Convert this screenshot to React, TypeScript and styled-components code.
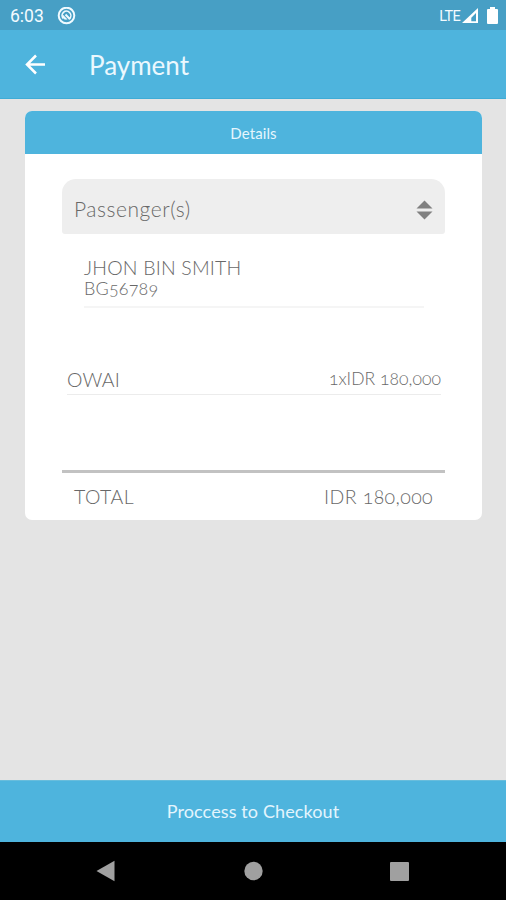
import React from "react";
import styled, { createGlobalStyle } from "styled-components";

const GlobalStyle = createGlobalStyle`
  * { box-sizing: border-box; }
  body { margin: 0; background: #e4e4e4; }
`;

const Screen = styled.div`
  width: 506px;
  height: 900px;
  display: flex;
  flex-direction: column;
  overflow: hidden;
  background: #e4e4e4;
  font-family: "Lato", "Open Sans", sans-serif;
  font-variant-numeric: oldstyle-nums;
`;

const StatusBar = styled.div`
  height: 30px;
  flex: none;
  display: flex;
  align-items: center;
  padding: 2px 8px 0 10px;
  background: #479fc5;
  color: #f3fbff;
  font-family: "Roboto", sans-serif;
  font-variant-numeric: normal;
`;

const Clock = styled.span`
  width: 47px;
  font-size: 17.5px;
`;

const Network = styled.span`
  margin-left: auto;
  margin-right: 2px;
  font-size: 14.5px;
  letter-spacing: -0.7px;
`;

const BatteryIcon = styled.svg`
  margin-left: 8px;
  margin-top: -2px;
`;

const AppBar = styled.header`
  height: 69px;
  flex: none;
  display: flex;
  align-items: center;
  padding-left: 24px;
  background: #4eb4dd;
  border-bottom: 1px solid #3eacd6;
`;

const Label = styled.span<{ $size: number; $spacing?: number; $weight?: number }>`
  font-size: ${(p) => p.$size}px;
  font-weight: ${(p) => p.$weight ?? 300};
  letter-spacing: ${(p) => p.$spacing ?? 0}px;
  line-height: 24px;
  white-space: nowrap;
`;

const Title = styled(Label)`
  margin-left: 43px;
  padding-top: 2px;
  color: #ebf8fe;
`;

const Content = styled.main`
  flex: 1;
  padding: 12px 24px 0 25px;
`;

const Card = styled.section`
  height: 409px;
  overflow: hidden;
  border-radius: 7px;
  background: #fff;
`;

const CardHeader = styled.div`
  height: 43px;
  display: flex;
  align-items: center;
  justify-content: center;
  background: #4eb4dd;
  color: #e6f6fd;
`;

const CardBody = styled.div`
  display: flex;
  flex-direction: column;
  padding: 25px 37px 0;
  color: #686868;
`;

const Selector = styled.div`
  height: 55px;
  display: flex;
  align-items: center;
  justify-content: space-between;
  padding: 5px 12px 0 12px;
  border-radius: 14px 14px 3px 3px;
  background: #eee;
`;

const SortIcon = styled.svg`
  margin-top: 1px;
`;

const Passenger = styled.div`
  height: 74px;
  display: flex;
  flex-direction: column;
  margin: 0 21px 0 22px;
  padding-top: 23px;
  border-bottom: 2px solid #f5f5f5;

  & > span { line-height: 21px; }
`;

const FareRow = styled.div`
  height: 87px;
  display: flex;
  align-items: flex-end;
  justify-content: space-between;
  margin: 0 4px 0 5px;
  padding-bottom: 2px;
  border-bottom: 1px solid #ececec;
`;

const FareAmount = styled(Label)`
  padding-bottom: 1px;
`;

const TotalRow = styled.div`
  height: 52px;
  display: flex;
  align-items: flex-start;
  justify-content: space-between;
  margin-top: 75px;
  padding: 12px 12px 0 12px;
  border-top: 3px solid #c2c2c2;
`;

const Checkout = styled.button`
  height: 62px;
  flex: none;
  border: 0;
  border-top: 1px solid #68bddc;
  padding: 0 0 2px;
  background: #4eb4dd;
  color: #e3f5fd;
  font-family: inherit;
`;

const NavBar = styled.nav`
  height: 58px;
  flex: none;
  display: flex;
  align-items: center;
  justify-content: space-between;
  padding: 0 96px;
  background: #000;
`;

export default function App() {
  return (
    <Screen>
      <GlobalStyle />
      <StatusBar>
        <Clock>6:03</Clock>
        <svg width="19" height="19" viewBox="0 0 19 19" fill="none" stroke="#f0faff">
          <circle cx="9.5" cy="8.5" r="7.8" strokeWidth="2" />
          <path d="M6.2 11.5A4.4 4.4 0 1 1 12.6 11.6" strokeWidth="1.6" />
          <path d="M8.5 7.5L13 12.2" strokeWidth="2" />
          <path d="M5.5 7.5L10 12.3H7.6L5.5 10.2Z" fill="#f0faff" strokeWidth=".5" />
        </svg>
        <Network>LTE</Network>
        <svg width="17" height="16" viewBox="0 0 17 16">
          <path fillRule="evenodd" fill="#fff" d="M16 0V15H0ZM14 5L9.3 9.7V13.2H14Z" />
        </svg>
        <BatteryIcon width="11" height="17" viewBox="0 0 11 17">
          <path fill="#fff" d="M3 0H8V2H10Q11 2 11 3V16Q11 17 10 17H1Q0 17 0 16V3Q0 2 1 2H3Z" />
        </BatteryIcon>
      </StatusBar>
      <AppBar>
        <svg width="22" height="22" viewBox="0 0 22 22" fill="none" stroke="#fff" strokeWidth="2.5">
          <path d="M21 11.5H3M12 2.5L3 11.5L12 20.5" />
        </svg>
        <Title $size={26} $weight={400}>Payment</Title>
      </AppBar>
      <Content>
        <Card>
          <CardHeader>
            <Label $size={15} $weight={400} $spacing={0.1}>Details</Label>
          </CardHeader>
          <CardBody>
            <Selector>
              <Label $size={21} $spacing={0.55}>Passenger(s)</Label>
              <SortIcon width="17" height="20" viewBox="0 0 17 20" fill="#808080">
                <path d="M8.5 .5L16.5 8.5H.5ZM.5 11.5H16.5L8.5 19.5Z" />
              </SortIcon>
            </Selector>
            <Passenger>
              <Label $size={19.5} $spacing={0.18}>JHON BIN SMITH</Label>
              <Label $size={18} $spacing={0.15}>BG56789</Label>
            </Passenger>
            <FareRow>
              <Label $size={19.5} $spacing={0.2}>OWAI</Label>
              <FareAmount $size={17.5} $spacing={0.06}>1xIDR 180,000</FareAmount>
            </FareRow>
            <TotalRow>
              <Label $size={19.5} $spacing={0.5}>TOTAL</Label>
              <Label $size={19.5} $spacing={0.4}>IDR 180,000</Label>
            </TotalRow>
          </CardBody>
        </Card>
      </Content>
      <Checkout>
        <Label $size={18} $weight={400} $spacing={0.12}>Proccess to Checkout</Label>
      </Checkout>
      <NavBar>
        <svg width="19" height="22" viewBox="0 0 19 22" fill="#a0a0a0"><path d="M0.5 11L18.5 .8V21.2Z" /></svg>
        <svg width="22" height="20" viewBox="0 0 22 20" fill="#a0a0a0"><circle cx="12.5" cy="10" r="9.2" /></svg>
        <svg width="21" height="21" viewBox="0 0 21 21" fill="#a0a0a0"><rect x="1" y="1" width="19" height="19" rx="1" /></svg>
      </NavBar>
    </Screen>
  );
}
